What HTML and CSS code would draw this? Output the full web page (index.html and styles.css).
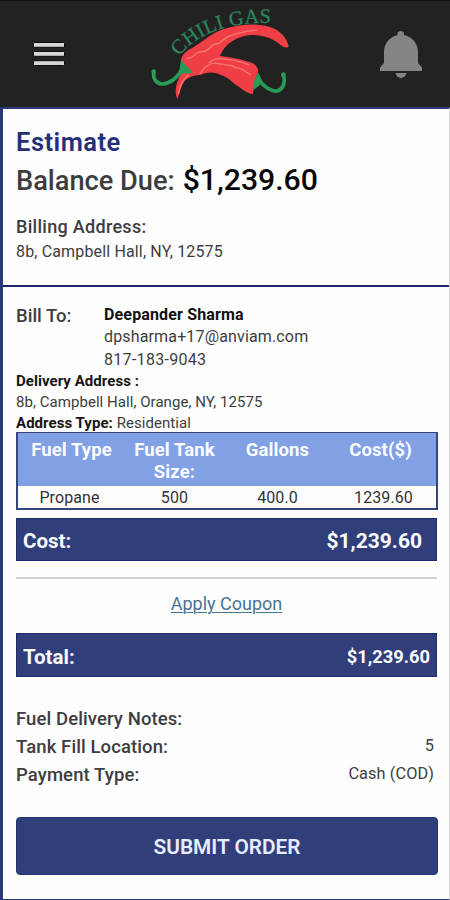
FILE: index.html
```html
<!DOCTYPE html>
<html lang="en">
<head>
<meta charset="utf-8">
<title>Chili Gas - Estimate</title>
<link rel="stylesheet" href="styles.css">
</head>
<body>
<header class="topbar">
  <svg class="menu" viewBox="0 0 32 26" role="img" aria-label="Menu">
    <g fill="#d8d6d6" stroke="#0c0c0c" stroke-width="1"><rect x="0.500" y="1.500" width="31" height="4.800" rx="1"/><rect x="0.500" y="10.500" width="31" height="4.800" rx="1"/><rect x="0.500" y="19.700" width="31" height="4.800" rx="1"/></g>
  </svg>
  <svg class="logo" viewBox="0 0 480 321" role="img" aria-label="Chili Gas">
    <defs><path id="arc" d="M116 169C172 103 265 60 410 70"/></defs>
    <text class="logo-text"><textPath href="#arc" textLength="305" lengthAdjust="spacing">CHILI GAS</textPath></text>
    <path fill="#ef3e46" d="M123 184C124 164 138 153 158 143C190 124 212 101 249 88C306 69 369 68 405 87C430 101 443 122 446 140C438 146 429 140 421 134C394 111 357 101 326 106C291 111 262 129 249 151L239 168C267 171 292 175 320 184C340 188 352 197 355 211L343 250L339 282C319 282 307 266 289 256C271 243 263 231 244 226C225 214 201 216 183 224C162 226 142 232 133 244C122 260 119 279 112 297C104 282 106 257 116 236L126 213Z"/>
    <path class="shine" d="M140 176C165 177 164 151 188 155C207 156 208 137 226 132C244 131 250 114 269 108C293 101 315 91 349 91"/>
    <path class="shine" d="M180 220C190 214 188 201 205 197C219 181 236 194 248 192C264 198 276 192 288 204C304 202 313 214 331 224M207 188C226 172 245 174 263 179C289 180 305 187 326 194M116 281C119 258 129 238 145 225"/>
    <path class="stem" d="M42 215C37 236 49 251 67 252C93 250 112 233 127 207M430 225C437 246 430 268 411 273C391 275 376 261 354 239"/>
    <path fill="#279b58" d="M123 180L160 220C145 218 132 221 112 225L118 211ZM354 215L370 250L363 253C354 259 348 266 340 271L343 244Z"/>
    <circle cx="41" cy="215" r="7" fill="#279b58"/><circle cx="430" cy="224" r="7" fill="#279b58"/>
  </svg>
  <svg class="bell" viewBox="0 0 44 50" role="img" aria-label="Notifications">
    <path fill="#858585" d="M18.500 5V3.500C18.500 0 25 0 25 3.500V5C34 7 39 14 39 22V33L43 37.500V41H1V37.500L5 33V22C5 14 10 7 18.500 5ZM16.500 43H27.500C26 49.500 18 49.500 16.500 43Z"/>
  </svg>
</header>
<main class="page">
  <section class="summary">
    <h1 class="title">Estimate</h1>
    <div class="balance"><span class="balance-label">Balance Due:</span><span class="balance-value">$1,239.60</span></div>
    <div class="billing-label">Billing Address:</div>
    <div class="billing-value">8b, Campbell Hall, NY, 12575</div>
  </section>
  <section class="details">
    <div class="bill-to">
      <div class="bill-label">Bill To:</div>
      <div class="contact">
        <div class="name">Deepander Sharma</div>
        <div class="email">dpsharma+17@anviam.com</div>
        <div class="phone">817-183-9043</div>
      </div>
    </div>
    <div class="delivery">
      <div><b>Delivery Address :</b></div>
      <div>8b, Campbell Hall, Orange, NY, 12575</div>
      <div><b>Address Type:</b> Residential</div>
    </div>
    <table class="fuel">
      <colgroup><col class="col-type"><col class="col-size"><col class="col-gallons"><col></colgroup>
      <thead><tr><th>Fuel Type</th><th>Fuel Tank<br>Size:</th><th>Gallons</th><th>Cost($)</th></tr></thead>
      <tbody><tr><td>Propane</td><td>500</td><td>400.0</td><td>1239.60</td></tr></tbody>
    </table>
    <div class="bar cost"><span class="bar-label">Cost:</span><span class="cost-value">$1,239.60</span></div>
    <hr class="rule">
    <div class="coupon"><a href="#">Apply Coupon</a></div>
    <div class="bar total"><span class="bar-label">Total:</span><span class="total-value">$1,239.60</span></div>
    <div class="notes">
      <div class="note"><span>Fuel Delivery Notes:</span></div>
      <div class="note"><span>Tank Fill Location:</span><span class="note-value">5</span></div>
      <div class="note"><span>Payment Type:</span><span class="note-value">Cash (COD)</span></div>
    </div>
    <button class="submit">SUBMIT ORDER</button>
  </section>
</main>
</body>
</html>
```
FILE: styles.css
```css
* { box-sizing: border-box; }
body { margin: 0; width: 450px; height: 900px; overflow: hidden; background: #fefefe; color: #3d3d3f; font-family: Roboto, "Liberation Sans", sans-serif; }
.topbar { display: flex; height: 107px; background: #222; border-top: 1px solid #101010; }
.menu { width: 32px; height: 26px; margin: 40px 0 0 33px; }
.logo { width: 160px; height: 107px; margin: -1px 0 0 75px; }
.logo-text { font-family: "Liberation Serif", serif; font-size: 61px; fill: #2d875b; stroke: #2d875b; stroke-width: .8; }
.shine { fill: none; stroke: #f77972; stroke-width: 4; stroke-linecap: round; }
.stem { fill: none; stroke: #279b58; stroke-width: 11; stroke-linecap: round; }
.bell { width: 44px; height: 50px; margin: 29px 0 0 79px; }
.page { height: 793px; border: solid #2a3a78; border-width: 2px 0 1px 3px; border-right: 1px solid #d5d5d9; }
.summary { height: 178px; padding: 18px 13px 0; border-bottom: 2px solid #1d2870; }
.title { margin: 0; font-size: 25.500px; line-height: 30px; font-weight: 600; color: #253078; letter-spacing: .5px; }
.balance { display: flex; align-items: baseline; gap: 8px; height: 36px; margin-top: 5px; line-height: 36px; font-weight: 500; }
.balance-label { font-size: 27.200px; }
.balance-value { font-size: 30.200px; color: #080808; }
.billing-label { margin-top: 17px; font-size: 18px; line-height: 24px; font-weight: 500; letter-spacing: .3px; }
.billing-value { margin-top: 2px; font-size: 16px; line-height: 22px; letter-spacing: .15px; }
.details { padding: 17px 12px 0 13px; }
.bill-to { display: flex; height: 67px; }
.bill-label { width: 88px; font-size: 18.500px; line-height: 24px; font-weight: 500; }
.contact { font-size: 16px; line-height: 22.300px; letter-spacing: .15px; }
.phone { letter-spacing: .3px; }
.name { color: #111; font-weight: 700; font-size: 16px; }
.delivery { font-size: 15px; line-height: 21px; height: 61px; letter-spacing: .05px; }
.delivery b { color: #151515; font-weight: 700; }
.fuel { width: 422px; height: 78px; border: 2px solid #344580; border-top-width: 1px; border-collapse: separate; border-spacing: 0; table-layout: fixed; text-align: center; }
.col-type, .col-gallons { width: 107px; }
.col-size { width: 99px; }
.fuel th { height: 53px; padding: 6px 0 0; vertical-align: top; background: #82a1e5; color: #fafcff; font-size: 18.500px; line-height: 22px; font-weight: 700; letter-spacing: .1px; }
.fuel td { height: 22px; padding: 2px 0 0; font-size: 16px; line-height: 20px; color: #333; letter-spacing: .1px; }
.fuel th:last-child { padding-right: 6px; }
.fuel td:first-child { padding-right: 4px; }
.bar { display: flex; align-items: center; justify-content: space-between; height: 43px; padding: 2px 7px 0 6px; background: #303f79; border: 1px solid #232c6a; color: #fafaff; font-weight: 700; }
.bar-label { font-size: 20.500px; }
.cost { margin-top: 8px; padding-right: 14px; }
.cost-value { font-size: 21px; }
.rule { height: 2px; margin: 16px 0 0; border: 0; background: #d3d3d5; }
.coupon { margin-top: 13px; height: 24px; text-align: center; font-size: 18px; line-height: 24px; }
.coupon a { color: #477494; text-decoration-thickness: 1px; text-underline-offset: 2px; }
.total { height: 44px; margin-top: 17px; padding: 3px 6px 0; }
.total-value { font-size: 18.300px; }
.notes { margin-top: 28px; }
.note { display: flex; justify-content: space-between; height: 28px; padding-right: 3px; font-size: 18.500px; line-height: 28px; font-weight: 500; letter-spacing: .1px; }
.note-value { font-size: 16.300px; font-weight: 400; line-height: 26px; }
.submit { display: block; width: 422px; height: 58px; margin: 28px 0 0; padding: 2px 0 0; border: 1px solid #263270; border-radius: 4px; background: #303f79; color: #e8ecff; font: 600 20.800px Roboto, sans-serif; }
```
